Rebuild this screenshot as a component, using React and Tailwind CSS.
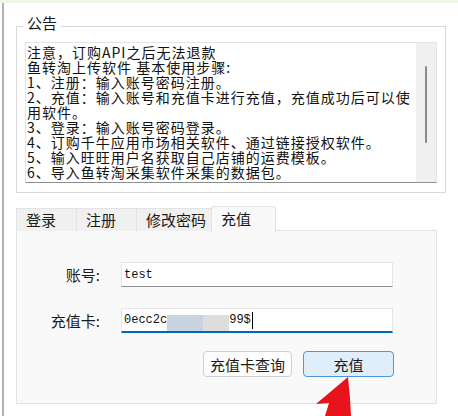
import React from 'react'

const notice = [
  '注意，订购API之后无法退款',
  '鱼转淘上传软件 基本使用步骤:',
  '1、注册：输入账号密码注册。',
  '2、充值：输入账号和充值卡进行充值，充值成功后可以使',
  '用软件。',
  '3、登录：输入账号密码登录。',
  '4、订购千牛应用市场相关软件、通过链接授权软件。',
  '5、输入旺旺用户名获取自己店铺的运费模板。',
  '6、导入鱼转淘采集软件采集的数据包。',
]

const tabs = [
  { label: '登录', w: 'w-[61px]' },
  { label: '注册', w: 'w-[61px]' },
  { label: '修改密码', w: 'w-[76px]' },
]

const NoticeBox = () => (
  <fieldset className="w-[430px] mt-[12px] border border-[#d9d9d9] p-0 m-0 min-w-0">
    <legend className="ml-[6px] px-[4px] pb-[7px] text-[15px] leading-[15px] text-[#1a1a1a]">公告</legend>
    <div className="ml-[8px] mt-[5px] mb-[9px] w-[412px] h-[141px] bg-white border border-[#e3e3e3] border-b-[#8e8e8e] flex overflow-hidden">
      <div className="flex-1 pt-[2px] pl-[1px] text-[14px] tracking-[1px] leading-[15px] text-[#111] overflow-hidden">
        {notice.map((line, i) => (
          <div key={i} className="whitespace-nowrap">{line}</div>
        ))}
      </div>
      <div className="w-[20px] bg-[#f0f0f0] flex justify-center pt-[23px]">
        <div className="w-[2px] h-[77px] bg-[#8a8a8a] rounded-full" />
      </div>
    </div>
  </fieldset>
)

const Field = ({ label, children, focused, className = '' }) => (
  <div className={`flex items-center h-[25px] ${className}`}>
    <div className="w-[83px] text-right text-[15px] leading-[15px] text-[#1a1a1a]">{label}</div>
    <div
      className={`ml-[21px] w-[272px] h-[25px] bg-white border border-[#e5e5e5] flex items-stretch pl-[2px] font-['Liberation_Mono',monospace] text-[12px] text-[#111] ${
        focused ? 'border-b-2 border-b-[#0067c0]' : 'border-b-[#8c8c8c]'
      }`}
    >
      {children}
    </div>
  </div>
)

export default function App() {
  return (
    <div className="relative w-[458px] h-[416px] overflow-hidden bg-white flex flex-col font-['Noto_Sans_CJK_SC','Noto_Sans',sans-serif]">
      <div className="h-[3px] bg-[#eef6e4]" />
      <div className="flex-1 flex">
        <div className="ml-[2px] w-[2px] bg-[#b0b0b0]" />
        <div className="pl-[12px] flex flex-col">
          <NoticeBox />

          <div className="mt-[12px] flex items-end h-[26px] relative z-10">
            {tabs.map((t, i) => (
              <div
                key={t.label}
                className={`${t.w} h-[23px] ${i > 0 ? '-ml-[1px]' : ''} bg-[#f0f0f0] border border-b-0 border-[#e3e3e3] pl-[9px] flex items-center text-[15px] text-[#1a1a1a]`}
              >
                {t.label}
              </div>
            ))}
            <div className="-ml-[1px] w-[65px] h-[26px] bg-[#f9f9f9] border border-b-0 border-[#e3e3e3] rounded-t-[3px] pl-[9px] flex items-center text-[15px] text-[#1a1a1a] translate-y-[1px]">
              充值
            </div>
          </div>

          <div className="-mt-[1px] w-[421px] h-[174px] bg-[#f9f9f9] border border-[#e3e3e3] flex flex-col pt-[31px]">
            <Field label="账号:">
              <span className="self-center">test</span>
            </Field>
            <Field label="充值卡:" focused className="mt-[21px]">
              <span className="self-center">0ecc2c</span>
              <div className="self-end w-[36px] h-[16px] bg-[#c8d5e1]" />
              <div className="self-end w-[26px] h-[16px] bg-[#dddddd]" />
              <span className="self-center">99$</span>
              <div className="self-center ml-[1px] w-[1px] h-[17px] bg-black" />
            </Field>
            <div className="mt-[18px] flex justify-end gap-[11px] pr-[42px]">
              <button className="w-[89px] h-[26px] bg-[#fdfdfd] border border-[#d0d0d0] rounded-[4px] text-[15px] text-[#1a1a1a] leading-none">
                充值卡查询
              </button>
              <button className="w-[91px] h-[26px] bg-[#e0eefa] border border-[#4c97da] rounded-[4px] text-[15px] text-[#1a1a1a] leading-none">
                充值
              </button>
            </div>
          </div>
        </div>
      </div>

      <svg className="absolute left-0 top-0 pointer-events-none" width="458" height="416" viewBox="0 0 458 416">
        <polygon points="348,377 316,404 329,403 325,416 351,416 350,398" fill="#e8141c" />
      </svg>
    </div>
  )
}
